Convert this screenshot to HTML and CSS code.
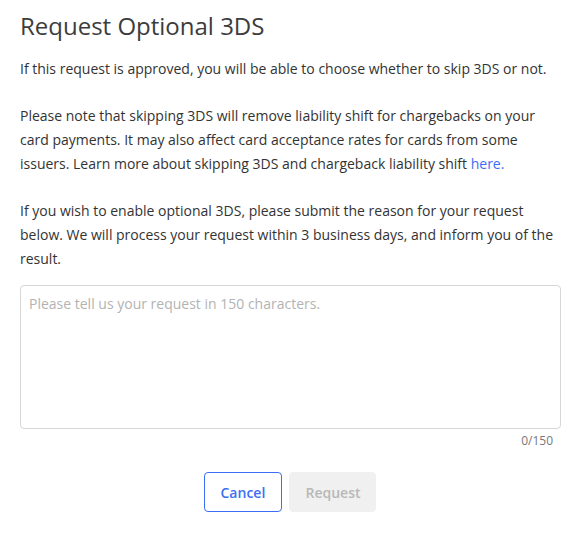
FILE: index.html
```html
<!DOCTYPE html>
<html>
<head>
<meta charset="utf-8">
<link rel="stylesheet" href="styles.css">
</head>
<body>
<div class="dialog">
  <h1 class="title">Request Optional 3DS</h1>
  <p class="text first">If this request is approved, you will be able to choose whether to skip 3DS or not.</p>
  <p class="text">Please note that skipping 3DS will remove liability shift for chargebacks on your card payments. It may also affect card acceptance rates for cards from some issuers. Learn more about skipping 3DS and chargeback liability shift <a class="link" href="#">here.</a></p>
  <p class="text">If you wish to enable optional 3DS, please submit the reason for your request below. We will process your request within 3 business days, and inform you of the result.</p>
  <textarea class="input" placeholder="Please tell us your request in 150 characters."></textarea>
  <div class="counter">0/150</div>
  <div class="actions">
    <button class="btn btn-cancel">Cancel</button>
    <button class="btn btn-request" disabled>Request</button>
  </div>
</div>
</body>
</html>
```
FILE: styles.css
```css
* { box-sizing: border-box; }
html, body { margin: 0; padding: 0; background: #fff; }
body {
  font-family: "Open Sans", "Noto Sans", sans-serif;
  color: #333;
}
.dialog {
  padding: 8px 20px 0 20px;
  display: flex;
  flex-direction: column;
}
.title {
  margin: 0;
  font-size: 24px;
  line-height: 36px;
  font-weight: 400;
  color: #3c3c3c;
}
.text {
  margin: 23px 0 0 0;
  font-size: 14px;
  line-height: 24px;
  color: #333;
}
.text.first { margin-top: 13px; }
.link { color: #3b6ef5; text-decoration: none; }
.input {
  margin-top: 14px;
  width: 541px;
  height: 144px;
  border: 1px solid #d6d6d6;
  border-radius: 4px;
  padding: 8px 8px;
  font-family: inherit;
  font-size: 14px;
  line-height: 20px;
  color: #333;
  resize: none;
  outline: none;
}
.input::placeholder { color: #b3b3b3; }
.counter {
  width: 541px;
  text-align: right;
  padding-right: 8px;
  font-size: 12px;
  line-height: 20px;
  margin-top: 2px;
  color: #777;
}
.actions {
  display: flex;
  justify-content: center;
  gap: 7px;
  margin-top: 21px;
}
.btn {
  height: 40px;
  border-radius: 4px;
  font-family: inherit;
  font-size: 14px;
  font-weight: 600;
  padding: 0 16px;
  cursor: pointer;
}
.btn-cancel {
  width: 78px;
  background: #fff;
  border: 1px solid #3b6ef5;
  color: #3b6ef5;
}
.btn-request {
  width: 87px;
  background: #f0f0f0;
  border: 1px solid #f0f0f0;
  color: #b8b8b8;
}
```
